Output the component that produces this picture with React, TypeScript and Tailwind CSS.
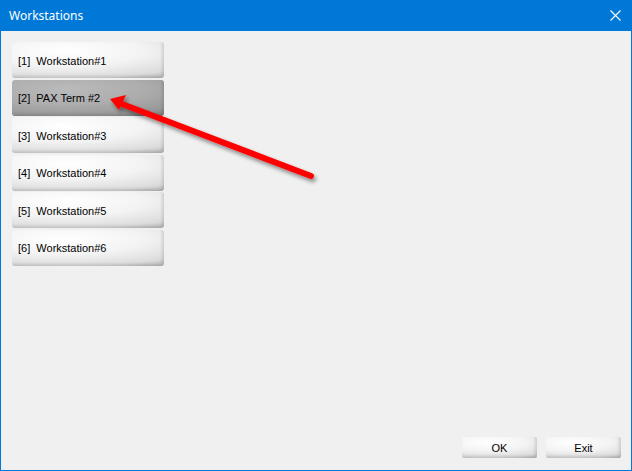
import React from "react";

const items = [
  { n: 1, label: "Workstation#1" },
  { n: 2, label: "PAX Term #2", selected: true },
  { n: 3, label: "Workstation#3" },
  { n: 4, label: "Workstation#4" },
  { n: 5, label: "Workstation#5" },
  { n: 6, label: "Workstation#6" },
];

const normalBtn =
  "bg-[radial-gradient(ellipse_115%_95%_at_35%_25%,#ffffff_0%,#f3f3f3_45%,#dcdcdc_80%,#b4b4b4_100%)] shadow-[inset_-2px_-2px_3px_rgba(0,0,0,0.12)]";
const selectedBtn =
  "bg-[radial-gradient(ellipse_115%_95%_at_35%_25%,#bababa_0%,#adadad_45%,#989898_80%,#7a7a7a_100%)] shadow-[inset_-2px_-2px_3px_rgba(0,0,0,0.12)]";

export default function App() {
  return (
    <div className="w-[632px] h-[471px] flex flex-col bg-[#0078d7] relative overflow-hidden">
      <div className="h-[31px] flex items-center justify-between pl-[9px] pr-[10px] text-white">
        <span className="text-[12px]" style={{ fontFamily: '"Noto Sans", "Open Sans", sans-serif' }}>
          Workstations
        </span>
        <svg width="11" height="11" viewBox="0 0 11 11" className="mr-[1px]">
          <path d="M0.5 0.5 L10.5 10.5 M10.5 0.5 L0.5 10.5" stroke="white" strokeWidth="1.1" />
        </svg>
      </div>
      <div
        className="flex-1 mx-px mb-px bg-[#f0f0f0] flex flex-col justify-between pt-[11px] pl-[11px] pr-[10px] pb-[12px]"
        style={{ fontFamily: '"Liberation Sans", Arial, sans-serif' }}
      >
        <div className="flex flex-col gap-[1.5px] w-[152px]">
          {items.map((it) => (
            <div
              key={it.n}
              className={`h-[36px] rounded-[3px] flex items-center pl-[6px] pt-[2px] text-[11px] text-black whitespace-pre ${
                it.selected ? selectedBtn : normalBtn
              }`}
            >
              {`[${it.n}]  ${it.label}`}
            </div>
          ))}
        </div>
        <div className="flex justify-end gap-[9px]">
          <div className={`w-[75px] h-[21px] rounded-[2px] flex items-center justify-center pt-px text-[11px] text-black ${normalBtn}`}>
            OK
          </div>
          <div className={`w-[75px] h-[21px] rounded-[2px] flex items-center justify-center pt-px text-[11px] text-black ${normalBtn}`}>
            Exit
          </div>
        </div>
      </div>
      <svg className="absolute left-0 top-0 pointer-events-none" width="632" height="471">
        <defs>
          <filter id="sh" x="-20%" y="-20%" width="140%" height="140%">
            <feGaussianBlur in="SourceAlpha" stdDeviation="2" />
            <feOffset dx="2" dy="3" result="b" />
            <feComponentTransfer>
              <feFuncA type="linear" slope="0.45" />
            </feComponentTransfer>
            <feMerge>
              <feMergeNode />
              <feMergeNode in="SourceGraphic" />
            </feMerge>
          </filter>
        </defs>
        <g filter="url(#sh)">
          <line x1="311" y1="176" x2="122" y2="104" stroke="#ff0000" strokeWidth="6" strokeLinecap="round" />
          <polygon points="110,99 126,95 119,110" fill="#ff0000" />
        </g>
      </svg>
    </div>
  );
}
